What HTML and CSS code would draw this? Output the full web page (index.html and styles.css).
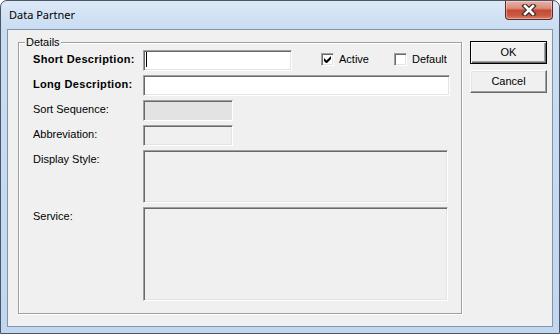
FILE: index.html
```html
<!DOCTYPE html>
<html>
<head>
<meta charset="utf-8">
<link rel="stylesheet" href="styles.css">
</head>
<body>
<div class="window">
  <div class="titlebar">
    <span class="title">Data Partner</span>
    <div class="close">
      <svg width="16" height="12" viewBox="0 0 16 12">
        <path d="M4 2 L12 10 M12 2 L4 10" stroke="#3b2a28" stroke-width="5" stroke-linecap="square" fill="none"/>
        <path d="M4 2 L12 10 M12 2 L4 10" stroke="#ffffff" stroke-width="2.6" stroke-linecap="square" fill="none"/>
      </svg>
    </div>
  </div>
  <div class="client">
    <div class="group">
      <span class="legend">Details</span>
      <div class="form">
        <span class="lbl bold">Short Description:</span>
        <div class="row1">
          <div class="field f-short white"><span class="caret"></span></div>
          <span class="check-item first"><span class="cb"><svg width="7" height="7" viewBox="0 0 7 7"><path d="M0 2 L0 5 L2 7 L3 7 L7 3 L7 0 L2.5 4.5 Z" fill="#000"/></svg></span>Active</span>
          <span class="check-item"><span class="cb"></span>Default</span>
        </div>
        <span class="lbl bold">Long Description:</span>
        <div class="field f-long white"></div>
        <span class="lbl">Sort Sequence:</span>
        <div class="field f-small disabled"></div>
        <span class="lbl">Abbreviation:</span>
        <div class="field f-small"></div>
        <span class="lbl">Display Style:</span>
        <div class="field f-display"></div>
        <span class="lbl">Service:</span>
        <div class="field f-service"></div>
      </div>
    </div>
    <div class="buttons">
      <div class="btn default">OK</div>
      <div class="btn">Cancel</div>
    </div>
  </div>
</div>
</body>
</html>
```
FILE: styles.css
```css
html, body {
  margin: 0;
  padding: 0;
  background: #ffffff;
}
.window {
  width: 560px;
  height: 334px;
  box-sizing: border-box;
  border: 1px solid #4a5666;
  border-radius: 7px 7px 0 0;
  background: linear-gradient(to bottom, #dce9f7 0px, #c9dcf2 28px, #c2d7ef 100%);
  display: flex;
  flex-direction: column;
  font-family: "Liberation Sans", Arial, sans-serif;
  font-size: 11px;
  color: #000;
  overflow: hidden;
}
.titlebar {
  height: 28px;
  display: flex;
  align-items: flex-start;
  flex: none;
}
.title {
  font-family: "Noto Sans", "Open Sans", sans-serif;
  font-size: 11px;
  line-height: 16px;
  padding: 6px 0 0 8px;
  color: #000;
}
.close {
  margin-left: auto;
  margin-right: 6px;
  margin-top: -1px;
  width: 48px;
  height: 20px;
  box-sizing: border-box;
  border: 1px solid #5e2b24;
  border-top-color: #7a3a30;
  border-radius: 0 0 4px 4px;
  background: linear-gradient(to bottom, #eab1a4 0%, #dc8d7c 40%, #c54a35 52%, #c95a42 80%, #d9826c 100%);
  box-shadow: inset 0 0 0 1px rgba(255,255,255,0.35);
  display: flex;
  align-items: center;
  justify-content: center;
}
.close svg {
  display: block;
}
.client {
  margin: 0 6px 6px 6px;
  height: 298px;
  box-sizing: border-box;
  border: 1px solid #8494a8;
  background: #f0f0f0;
  display: flex;
  align-items: flex-start;
}
.group {
  position: relative;
  margin: 12px 0 0 10px;
  width: 444px;
  height: 272px;
  box-sizing: border-box;
  border: 1px solid #a0a0a0;
  box-shadow: 1px 1px 0 #ffffff, inset 1px 1px 0 #ffffff;
}
.legend {
  position: absolute;
  top: -7px;
  left: 6px;
  padding: 0 1px;
  background: #f0f0f0;
  line-height: 13px;
}
.form {
  display: grid;
  grid-template-columns: 110px auto;
  row-gap: 4px;
  padding: 7px 0 0 14px;
  align-items: start;
  justify-items: start;
}
.lbl {
  line-height: 13px;
  padding-top: 3px;
  white-space: nowrap;
}
.bold {
  font-weight: bold;
  letter-spacing: 0.32px;
}
.row1 {
  display: flex;
  align-items: flex-start;
}
.field {
  box-sizing: border-box;
  height: 21px;
  border: 1px solid;
  border-color: #a0a0a0 #ffffff #ffffff #a0a0a0;
  box-shadow: inset 1px 1px 0 #696969, inset -1px -1px 0 #e3e3e3;
  background: #f0f0f0;
}
.white {
  background: #ffffff;
}
.disabled {
  background: #e3e3e3;
}
.f-short { width: 149px; }
.f-long { width: 307px; }
.f-small { width: 90px; }
.f-display { width: 305px; height: 53px; }
.f-service { width: 305px; height: 94px; }
.caret {
  display: block;
  width: 1px;
  height: 15px;
  background: #000;
  margin: 1px 0 0 2px;
}
.check-item {
  display: inline-flex;
  align-items: flex-start;
  line-height: 13px;
  padding-top: 3px;
  white-space: nowrap;
}
.check-item.first {
  margin-left: 29px;
  width: 73px;
}
.cb {
  box-sizing: border-box;
  width: 13px;
  height: 13px;
  margin-right: 5px;
  border: 1px solid;
  border-color: #a0a0a0 #ffffff #ffffff #a0a0a0;
  box-shadow: inset 1px 1px 0 #696969, inset -1px -1px 0 #e3e3e3;
  background: #ffffff;
  display: flex;
  align-items: center;
  justify-content: center;
}
.cb svg {
  display: block;
}
.buttons {
  margin: 11px 0 0 8px;
  display: flex;
  flex-direction: column;
  gap: 6px;
}
.btn {
  box-sizing: border-box;
  width: 77px;
  height: 23px;
  border: 1px solid;
  border-color: #ffffff #696969 #696969 #ffffff;
  box-shadow: inset -1px -1px 0 #a0a0a0, inset 1px 1px 0 #e3e3e3;
  background: #f0f0f0;
  text-align: center;
  line-height: 21px;
}
.btn.default {
  border: 1px solid #000;
  box-shadow: inset 1px 1px 0 #ffffff, inset -1px -1px 0 #696969, inset -2px -2px 0 #a0a0a0;
}
```
